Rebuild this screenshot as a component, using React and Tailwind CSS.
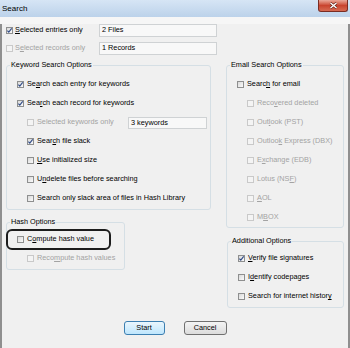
import clsx from "clsx";

function Box({ checked, disabled }) {
  return (
    <span
      className={clsx(
        "flex h-[7px] w-[7px] shrink-0 items-center justify-center border",
        disabled
          ? "border-[#c9c9c9] bg-[#f4f4f4]"
          : "border-[#8e8f8f] bg-linear-to-br from-[#d9d9d9] to-[#fbfbfb]",
      )}
    >
      {checked && (
        <svg width="5" height="5" viewBox="0 0 5 5" className="overflow-visible">
          <path d="M0.4 2.6 L1.8 4.2 L4.7 0.4" fill="none" stroke="#2f4a86" strokeWidth="1.1" />
        </svg>
      )}
    </span>
  );
}

function Row({ checked, disabled, indent, className, children }) {
  return (
    <div
      className={clsx(
        "flex h-[19px] items-center gap-[3px]",
        indent ? "pl-[20px]" : "pl-[10px]",
        className,
      )}
    >
      <Box checked={checked} disabled={disabled} />
      <span className={disabled ? "text-[#a3a3a3]" : "text-black"}>{children}</span>
    </div>
  );
}

function Group({ title, className, children }) {
  return (
    <div className={clsx("rounded-[3px] border border-[#d5dfe5]", className)}>
      <div className="-mt-[6px] ml-[3px] w-fit bg-[#f0f0f0] px-[1px] leading-[9px]">{title}</div>
      {children}
    </div>
  );
}

function Field({ className, children }) {
  return (
    <div className={clsx("border border-[#cfd2d4] bg-[#f8f8f8] pl-[2px] leading-[10px] text-black", className)}>
      {children}
    </div>
  );
}

export default function App() {
  return (
    <div className="h-[348px] w-[350px] bg-[#f6f6f6] font-['Liberation_Sans',Arial,sans-serif] text-[7.3px] text-black">
      <div className="flex h-[17px] items-start justify-between bg-linear-to-b from-[#d6e5f5] to-[#bcd2ea]">
        <span className="pl-[2px] pt-[4px] text-[8px] leading-[9px]">Search</span>
        <div className="mr-[2px] flex h-[12px] w-[30px] items-center justify-center rounded-b-[3px] border border-t-0 border-[#7a2c22] bg-linear-to-b from-[#e9a89a] via-[#c9442f] to-[#d66a52]">
          <svg width="9" height="7" viewBox="0 0 9 7">
            <path d="M1.5 1 L7.5 6 M7.5 1 L1.5 6" stroke="#5a1d15" strokeWidth="2.6" />
            <path d="M1.5 1 L7.5 6 M7.5 1 L1.5 6" stroke="#ffffff" strokeWidth="1.5" />
          </svg>
        </div>
      </div>

      <div className="h-[330px] border-x-2 border-b-2 border-[#8f8f8f] bg-[#f0f0f0] pl-[4px]">
        <div className="mt-[7px] flex h-[13px] items-center">
          <div className="flex w-[93px] items-center gap-[2px]">
            <Box checked />
            <span><u>S</u>elected entries only</span>
          </div>
          <Field className="h-[13px] w-[118px]">2 Files</Field>
        </div>
        <div className="mt-[5px] flex h-[13px] items-center">
          <div className="flex w-[93px] items-center gap-[2px]">
            <Box disabled />
            <span className="text-[#a3a3a3]">S<u>e</u>lected records only</span>
          </div>
          <Field className="h-[13px] w-[118px]">1 Records</Field>
        </div>

        <div className="mt-[10px] flex items-start gap-[15px]">
          <div className="w-[205px]">
            <Group title="Keyword Search Options" className="pb-[1px]">
              <div className="mt-[6px]" />
              <Row checked>Se<u>a</u>rch each entry for keywords</Row>
              <Row checked>Sea<u>r</u>ch each record for keywords</Row>
              <div className="flex h-[19px] items-center pr-[3px]">
                <Row indent disabled>Selected keywords only</Row>
                <Field className="ml-auto h-[12px] w-[79px]">3 keywords</Field>
              </div>
              <Row indent checked>Sear<u>c</u>h file slack</Row>
              <Row indent><u>U</u>se initialized size</Row>
              <Row indent>U<u>n</u>delete files before searching</Row>
              <Row indent>Search only slack area of files in Hash Library</Row>
            </Group>

            <Group title="Hash Options" className="mt-[12px] w-[119px] pb-[1px]">
              <div className="mt-[4px]" />
              <div className="relative">
                <Row>C<u>o</u>mpute hash value</Row>
                <span className="absolute -top-[1px] -bottom-[1px] -left-[1px] w-[105px] rounded-[6px] border-2 border-[#1c1c1c]" />
              </div>
              <Row indent disabled>Reco<u>m</u>pute hash values</Row>
            </Group>
          </div>

          <div className="w-[118px]">
            <Group title="Email Search Options">
              <div className="mt-[6px]" />
              <Row>Searc<u>h</u> for email</Row>
              <Row indent disabled>Reco<u>v</u>ered deleted</Row>
              <Row indent disabled>Out<u>l</u>ook (PST)</Row>
              <Row indent disabled>Outloo<u>k</u> Express (DBX)</Row>
              <Row indent disabled>E<u>x</u>change (EDB)</Row>
              <Row indent disabled>Lotus (NS<u>F</u>)</Row>
              <Row indent disabled><u>A</u>OL</Row>
              <Row indent disabled>M<u>B</u>OX</Row>
            </Group>

            <Group title="Additional Options" className="mt-[13px] ml-[1px] pb-[1px]">
              <div className="mt-[4px]" />
              <Row checked><u>V</u>erify file signatures</Row>
              <Row>I<u>d</u>entify codepages</Row>
              <Row>Search for internet histor<u>y</u></Row>
            </Group>
          </div>
        </div>

        <div className="mt-[13px] flex justify-center gap-[19px] pr-[4px]">
          <button className="h-[14px] w-[41px] rounded-[3px] border border-[#3c7fb1] bg-linear-to-b from-[#eaf6fd] to-[#bee6fd] leading-[12px]">
            Start
          </button>
          <button className="h-[14px] w-[43px] rounded-[3px] border border-[#707070] bg-linear-to-b from-[#f4f4f4] to-[#dcdcdc] leading-[12px]">
            Cancel
          </button>
        </div>
      </div>
    </div>
  );
}
